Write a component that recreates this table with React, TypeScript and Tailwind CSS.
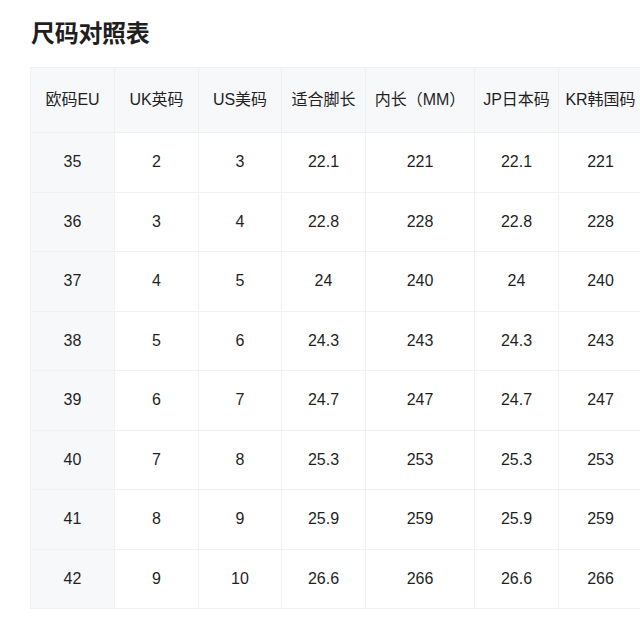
const headers = ["欧码EU", "UK英码", "US美码", "适合脚长", "内长（MM）", "JP日本码", "KR韩国码"];

const rows = [
  ["35", "2", "3", "22.1", "221", "22.1", "221"],
  ["36", "3", "4", "22.8", "228", "22.8", "228"],
  ["37", "4", "5", "24", "240", "24", "240"],
  ["38", "5", "6", "24.3", "243", "24.3", "243"],
  ["39", "6", "7", "24.7", "247", "24.7", "247"],
  ["40", "7", "8", "25.3", "253", "25.3", "253"],
  ["41", "8", "9", "25.9", "259", "25.9", "259"],
  ["42", "9", "10", "26.6", "266", "26.6", "266"],
];

const widths = ["w-[84px]", "w-[84px]", "w-[83px]", "w-[84px]", "w-[109px]", "w-[84px]", "w-[84px]"];

export default function App() {
  return (
    <div
      className="w-[640px] h-[636px] bg-white overflow-hidden text-[#1f1f1f]"
      style={{ fontFamily: '"Liberation Sans", "Noto Sans CJK SC", sans-serif' }}
    >
      <h1 className="pl-[31px] pt-[19px] text-[24px] leading-[30px] font-bold tracking-[-0.3px]">尺码对照表</h1>

      <div className="ml-[30px] mt-[18px] w-[612px] border-t border-l border-[#f0f0f2]">
        {/* header */}
        <div className="flex h-[65px] bg-[#f7f8fa]">
          {headers.map((h, i) => (
            <div
              key={h}
              className={`${widths[i]} shrink-0 flex items-center justify-center border-r border-b border-[#eeeff1] text-[16px]`}
            >
              {h}
            </div>
          ))}
        </div>

        {rows.map((row) => (
          <div key={row[0]} className="flex h-[59.5px]">
            {row.map((cell, i) => (
              <div
                key={i}
                className={`${widths[i]} shrink-0 flex items-center justify-center border-r border-b border-[#f1f1f3] text-[16px] ${
                  i === 0 ? "bg-[#f7f8fa]" : "bg-white"
                }`}
              >
                {cell}
              </div>
            ))}
          </div>
        ))}
      </div>
    </div>
  );
}
